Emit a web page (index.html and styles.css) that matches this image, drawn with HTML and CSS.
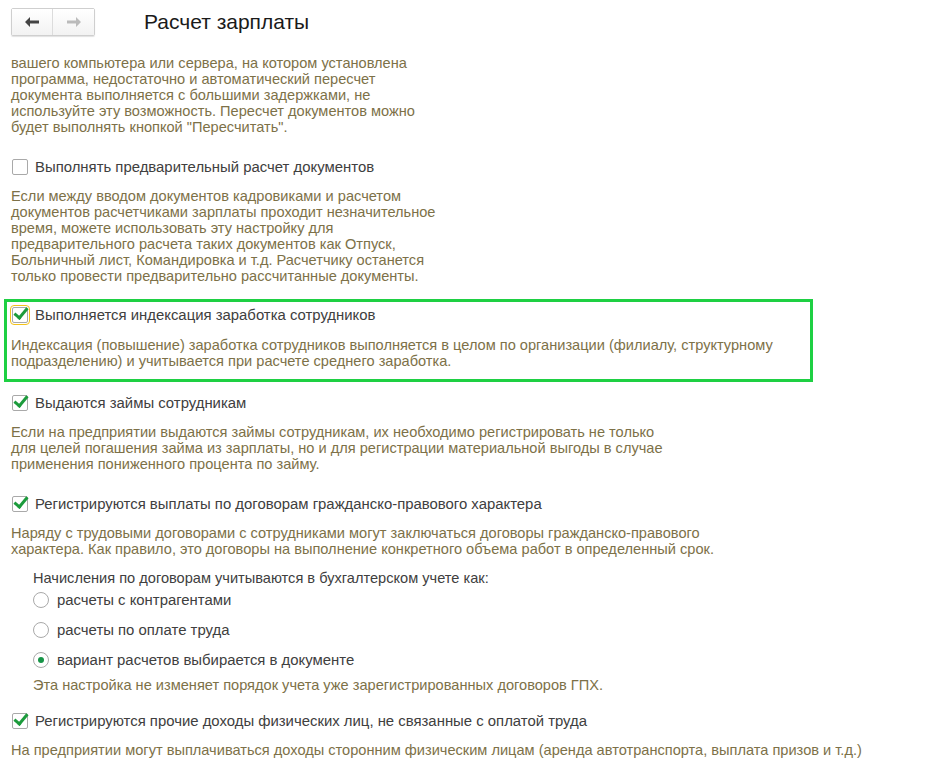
FILE: index.html
```html
<!DOCTYPE html>
<html lang="ru">
<head>
    <meta charset="UTF-8">
    <title>Расчет зарплаты</title>
    <link rel="stylesheet" href="styles.css">
</head>
<body>
    <div class="header">
        <div class="nav">
            <button class="nav-btn back">
                <svg width="14" height="10" viewBox="0 0 14 10"><path d="M0 5 L5 0 L5 3.5 L14 3.5 L14 6.5 L5 6.5 L5 10 Z" fill="#444"/></svg>
            </button>
            <button class="nav-btn fwd">
                <svg width="14" height="10" viewBox="0 0 14 10"><path d="M14 5 L9 0 L9 3.5 L0 3.5 L0 6.5 L9 6.5 L9 10 Z" fill="#bbb"/></svg>
            </button>
        </div>
        <div class="title">Расчет зарплаты</div>
    </div>

    <div class="content">
        <p class="note first">вашего компьютера или сервера, на котором установлена<br>
        программа, недостаточно и автоматический пересчет<br>
        документа выполняется с большими задержками, не<br>
        используйте эту возможность. Пересчет документов можно<br>
        будет выполнять кнопкой "Пересчитать".</p>

        <label class="check-row">
            <span class="box"></span>
            Выполнять предварительный расчет документов
        </label>
        <p class="note before-box">Если между вводом документов кадровиками и расчетом<br>
        документов расчетчиками зарплаты проходит незначительное<br>
        время, можете использовать эту настройку для<br>
        предварительного расчета таких документов как Отпуск,<br>
        Больничный лист, Командировка и т.д. Расчетчику останется<br>
        только провести предварительно рассчитанные документы.</p>

        <div class="highlight">
            <label class="check-row">
                <span class="box checked focused"></span>
                Выполняется индексация заработка сотрудников
            </label>
            <p class="note">Индексация (повышение) заработка сотрудников выполняется в целом по организации (филиалу, структурному<br>
            подразделению) и учитывается при расчете среднего заработка.</p>
        </div>

        <label class="check-row">
            <span class="box checked"></span>
            Выдаются займы сотрудникам
        </label>
        <p class="note loans">Если на предприятии выдаются займы сотрудникам, их необходимо регистрировать не только<br>
        для целей погашения займа из зарплаты, но и для регистрации материальной выгоды в случае<br>
        применения пониженного процента по займу.</p>

        <label class="check-row">
            <span class="box checked"></span>
            Регистрируются выплаты по договорам гражданско-правового характера
        </label>
        <p class="note before-sub">Наряду с трудовыми договорами с сотрудниками могут заключаться договоры гражданско-правового<br>
        характера. Как правило, это договоры на выполнение конкретного объема работ в определенный срок.</p>

        <div class="sub">
            <div class="sub-title">Начисления по договорам учитываются в бухгалтерском учете как:</div>
            <label class="radio-row"><span class="radio"></span>расчеты с контрагентами</label>
            <label class="radio-row"><span class="radio"></span>расчеты по оплате труда</label>
            <label class="radio-row"><span class="radio on"></span>вариант расчетов выбирается в документе</label>
            <p class="note">Эта настройка не изменяет порядок учета уже зарегистрированных договоров ГПХ.</p>
        </div>

        <label class="check-row">
            <span class="box checked"></span>
            Регистрируются прочие доходы физических лиц, не связанные с оплатой труда
        </label>
        <p class="note">На предприятии могут выплачиваться доходы сторонним физическим лицам (аренда автотранспорта, выплата призов и т.д.)</p>
    </div>
</body>
</html>
```

FILE: styles.css
```css
body {
    margin: 0;
    font-family: "Liberation Sans", Arial, sans-serif;
    font-size: 14.6px;
    color: #404040;
    background: #fff;
    overflow: hidden;
}
.header {
    display: flex;
    align-items: center;
    height: 44px;
    padding-left: 11px;
}
.nav {
    display: flex;
    border: 1px solid #cfcfcf;
    border-radius: 2px;
    box-shadow: 0 1px 1px rgba(0,0,0,0.12);
    margin-top: -1px;
}
.nav-btn {
    width: 41px;
    height: 26px;
    border: 0;
    background: linear-gradient(#fff, #f2f2f2);
    display: flex;
    align-items: center;
    justify-content: center;
    padding: 0;
}
.nav-btn.back {
    border-right: 1px solid #dcdcdc;
}
.title {
    font-size: 21px;
    color: #1a1a1a;
    margin-left: 49px;
    margin-top: -1px;
}
.content {
    padding: 11px 0 0 11px;
}
.note {
    color: #7d7148;
    line-height: 16px;
    margin: 0 0 21px;
}
.note.first {
    margin-bottom: 23px;
}
.note.before-box {
    margin-bottom: 15px;
}
.note.loans {
    margin-bottom: 23px;
}
.note.before-sub {
    margin-bottom: 13px;
}
.check-row {
    display: flex;
    align-items: center;
    height: 18px;
    margin-bottom: 12px;
    font-size: 14.9px;
    color: #404040;
}
.box {
    width: 16px;
    height: 16px;
    border: 1px solid #a9a9a9;
    border-radius: 2px;
    margin: 0 7px 0 1px;
    box-sizing: border-box;
    position: relative;
    flex: none;
}
.box.checked::after {
    content: "";
    position: absolute;
    left: 4px;
    top: -3px;
    width: 5px;
    height: 11px;
    border: solid #1c9b3c;
    border-width: 0 3px 3px 0;
    transform: rotate(40deg);
}
.box.focused {
    outline: 1px solid #f3c21a;
    outline-offset: 1px;
}
.highlight {
    border: 3px solid #1ed043;
    margin: 0 0 12px -7px;
    padding: 4px 0 6px 4px;
    width: 809px;
    box-sizing: border-box;
}
.highlight .check-row {
    margin-bottom: 13px;
}
.highlight .note {
    margin-bottom: 4px;
}
.sub {
    padding-left: 22px;
    margin-bottom: 19px;
}
.sub-title {
    line-height: 16px;
    margin-bottom: 5px;
}
.radio-row {
    display: flex;
    align-items: center;
    height: 18px;
    margin-bottom: 12px;
    font-size: 14.9px;
}
.radio {
    width: 16px;
    height: 16px;
    border: 1px solid #a9a9a9;
    border-radius: 50%;
    box-sizing: border-box;
    margin-right: 8px;
    position: relative;
    flex: none;
}
.radio.on::after {
    content: "";
    position: absolute;
    left: 4px;
    top: 4px;
    width: 6px;
    height: 6px;
    border-radius: 50%;
    background: #179447;
}
.sub .note {
    margin-top: -4px;
    margin-bottom: 0;
}
```
